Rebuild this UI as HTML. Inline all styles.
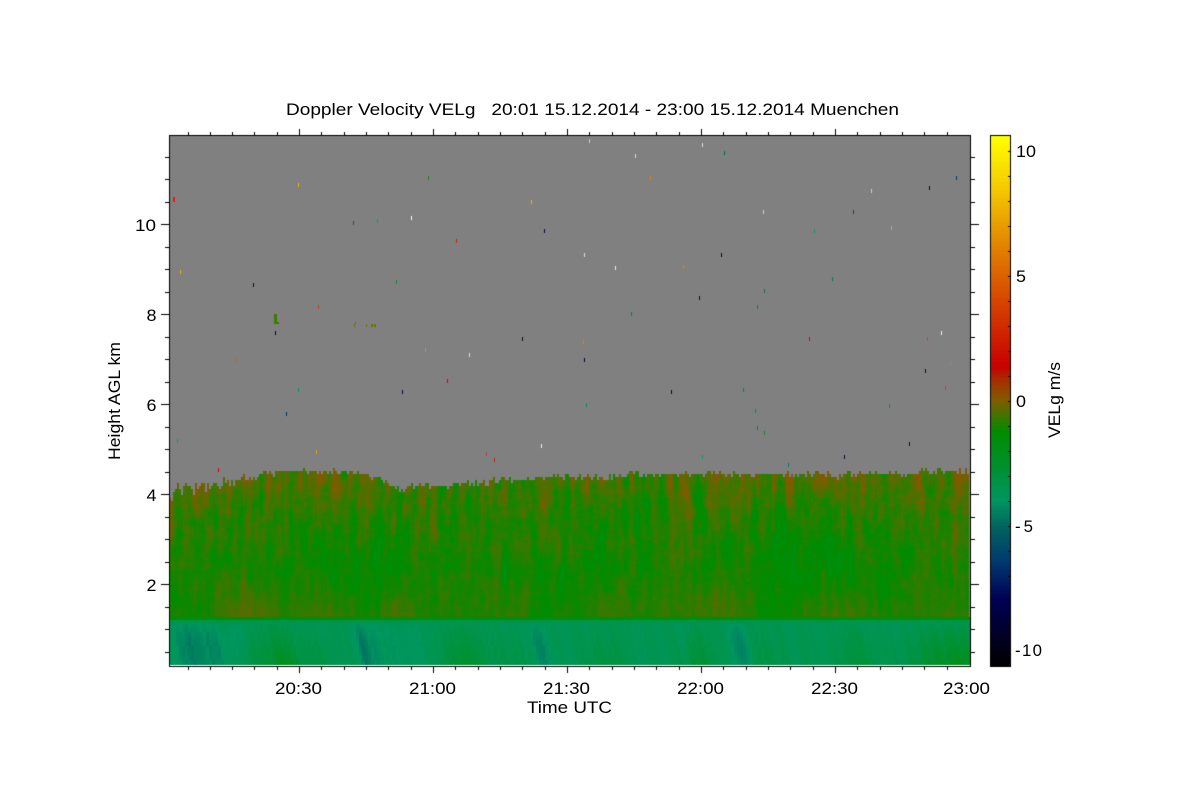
<!DOCTYPE html>
<html>
<head>
<meta charset="utf-8">
<title>Doppler Velocity VELg</title>
<style>
html,body{margin:0;padding:0;background:#fff;width:1200px;height:800px;overflow:hidden}
#wrap{position:relative;width:1200px;height:800px}
canvas,svg{position:absolute;left:0;top:0}
text{font-family:"Liberation Sans",sans-serif;fill:#000;font-size:16.8px}
</style>
</head>
<body>
<div id="wrap">
<canvas id="c" width="1200" height="800"></canvas>
<svg width="1200" height="800" viewBox="0 0 1200 800" xmlns="http://www.w3.org/2000/svg">
<text x="286" y="115" textLength="613" lengthAdjust="spacingAndGlyphs" xml:space="preserve">Doppler Velocity VELg   20:01 15.12.2014 - 23:00 15.12.2014 Muenchen</text>
<text x="275" y="694" textLength="47" lengthAdjust="spacingAndGlyphs">20:30</text>
<text x="409" y="694" textLength="47" lengthAdjust="spacingAndGlyphs">21:00</text>
<text x="543" y="694" textLength="47" lengthAdjust="spacingAndGlyphs">21:30</text>
<text x="677" y="694" textLength="47" lengthAdjust="spacingAndGlyphs">22:00</text>
<text x="811" y="694" textLength="47" lengthAdjust="spacingAndGlyphs">22:30</text>
<text x="943" y="694" textLength="47" lengthAdjust="spacingAndGlyphs">23:00</text>
<text x="527" y="713" textLength="85" lengthAdjust="spacingAndGlyphs">Time UTC</text>
<text x="135" y="231" textLength="21" lengthAdjust="spacingAndGlyphs">10</text>
<text x="146.500" y="321" textLength="10" lengthAdjust="spacingAndGlyphs">8</text>
<text x="146.500" y="411" textLength="10" lengthAdjust="spacingAndGlyphs">6</text>
<text x="146.500" y="501" textLength="10" lengthAdjust="spacingAndGlyphs">4</text>
<text x="146.500" y="591" textLength="10" lengthAdjust="spacingAndGlyphs">2</text>
<text transform="translate(120,460) rotate(-90)" textLength="118" lengthAdjust="spacingAndGlyphs">Height AGL km</text>
<text transform="translate(1060,438) rotate(-90)" textLength="76" lengthAdjust="spacingAndGlyphs">VELg m/s</text>
<text x="1016" y="157" textLength="20" lengthAdjust="spacingAndGlyphs">10</text>
<text x="1016" y="282" textLength="10" lengthAdjust="spacingAndGlyphs">5</text>
<text x="1016" y="407" textLength="10" lengthAdjust="spacingAndGlyphs">0</text>
<text x="1015" y="532" textLength="18" lengthAdjust="spacing">-5</text>
<text x="1015" y="656" textLength="27" lengthAdjust="spacing">-10</text>
</svg>
</div>
<script>
(function(){
var c=document.getElementById('c').getContext('2d');
var seed=12345;
function R(){seed=(seed+0x6D2B79F5)|0;var t=Math.imul(seed^(seed>>>15),1|seed);t=(t+Math.imul(t^(t>>>7),61|t))^t;return((t^(t>>>14))>>>0)/4294967296;}
var S=[[136,255,255,0],[190,245,200,0],[247,225,130,0],[300,215,70,0],[367,200,0,0],[378,170,40,0],[400,130,90,0],[415,70,115,0],[432,0,140,0],[470,0,145,50],[500,0,150,95],[530,0,95,95],[560,0,60,110],[600,0,0,85],[640,0,0,30],[667,0,0,0]];
function colY(y){
 if(y<=S[0][0])return [255,255,0];
 for(var i=1;i<S.length;i++){if(y<=S[i][0]){var a=S[i-1],b=S[i],t=(y-a[0])/(b[0]-a[0]);return [a[1]+(b[1]-a[1])*t,a[2]+(b[2]-a[2])*t,a[3]+(b[3]-a[3])*t];}}
 return [0,0,0];
}
function colV(v){var k=colY(401-25*v);return 'rgb('+Math.round(k[0])+','+Math.round(k[1])+','+Math.round(k[2])+')';}
function g(x,m,w){var d=(x-m)/w;return Math.exp(-d*d);}
// background
c.fillStyle='#fff';c.fillRect(0,0,1200,800);
c.fillStyle='#808080';c.fillRect(169,135,801,531);
// cloud top
var TP=[[169,488],[190,486],[230,480],[280,472],[350,472],[380,478],[395,488],[440,486],[470,483],[520,479],[600,476],[700,474],[800,474],[840,476],[870,473],[970,472]];
function top(x){for(var i=1;i<TP.length;i++){if(x<=TP[i][0]){var a=TP[i-1],b=TP[i];return a[1]+(b[1]-a[1])*(x-a[0])/(b[0]-a[0]);}}return 472;}
// noise: columns
var W=400,H=60,n=[],i,j;
for(i=0;i<W;i++){n[i]=[];var p=(R()-0.5)*2;for(j=0;j<H;j++){p=0.88*p+(R()-0.5)*0.7;n[i][j]=p;}}
var n2=[];
for(i=0;i<W;i++){n2[i]=[];for(j=0;j<H;j++){var a=n[Math.max(0,i-1)][j],b=n[Math.min(W-1,i+1)][j];n2[i][j]=0.4*n[i][j]+0.3*a+0.3*b;}}
// slow variations
var lf=[],pp=0;
for(i=0;i<W;i++){pp=0.96*pp+(R()-0.5)*0.25;lf[i]=pp;}
for(i=0;i<W;i++){
 var x=169+i*2,t0=top(x),jit=R();
 var tt=Math.round((t0+(jit<0.2?-3:jit>0.8?3:0))/3)*3;
 if(x<240&&R()<0.35)tt+=3+Math.floor(R()*3)*3;
 for(j=0;j<H;j++){
  var y=465+j*3;
  if(y<tt)continue;
  if(y>=618)break;
  var f=Math.min(1,Math.max(0,(y-t0)/(618-t0)));
  var base;
  if(f<0.3)base=-0.55-0.4*(f/0.3);else if(f<0.6)base=-0.95-0.15*(f-0.3)/0.3;else base=-1.1;
  var amp=0.45+0.65*(1-f);
  var v=base+n2[i][j]*amp+lf[i]*0.18*(1-f*0.4);
  v+=0.1*Math.sin(x/37+y/41)+0.08*Math.sin(x/83-y/29+1.3);
  if(x<300)v+=0.3*(1-f)*(300-x)/130;
  if(f>0.62){
   var w=(f-0.62)/0.38;
   var pat=0.9*g(x,245,30)+0.85*g(x,320,28)+0.7*g(x,400,25)+0.85*g(x,515,22)+0.7*g(x,600,30)+0.7*g(x,720,25)+0.85*g(x,830,25)+0.8*g(x,955,25)+0.45*g(x,465,25);
   v+=pat*w*0.65;
   if(x<215)v-=0.15;
  }
  if(v>-0.05)v=-0.05+(v+0.05)*0.4;
  c.fillStyle=colV(v);c.fillRect(x,y,2,3);
 }
}
// band
c.fillStyle=colV(-1.45);c.fillRect(170,617,800,3);
c.fillStyle=colV(-3.5);c.fillRect(170,620,800,4);
// boundary layer
var DK=[[188,14,1.0],[212,9,.75],[228,7,.4],[242,9,.35],[362,6,1.3],[373,5,.7],[392,8,.45],[408,7,.4],[417,4,.35],[536,6,.9],[544,4,.6],[685,8,.35],[738,7,1.0],[746,5,.5],[825,8,.15],[905,10,.1]];
var GR=[[278,14,1.1],[250,15,.5],[310,18,.4],[462,25,.7],[515,15,.3],[600,20,.4],[692,14,.8],[760,20,.3],[855,30,.4],[930,25,.9],[960,15,1.0]];
var nb=[];for(i=0;i<270;i++){nb[i]=(R()-0.5);}
for(var yy=624;yy<665;yy+=2){
 for(var xx=170;xx<970;xx+=3){
  var sx=xx-(yy-645)*0.22,d=0,gr=0,q;
  for(q=0;q<DK.length;q++)d+=DK[q][2]*g(sx,DK[q][0],DK[q][1]);
  for(q=0;q<GR.length;q++)gr+=GR[q][2]*g(sx,GR[q][0],GR[q][1]);
  var ny=(yy-624)/41;
  var streak=nb[Math.max(0,Math.min(269,Math.floor((sx-170)/3)))]||0;
  var vv=-3.65-d*ny*0.25-d*0.7*(0.4+0.6*Math.sin(Math.min(1,ny+0.1)*2.6))+gr*(0.2+1.1*ny)+streak*0.4;
  c.fillStyle=colV(vv);c.fillRect(xx,yy,3,2);
 }
}
// white row above axis
c.fillStyle='#fff';c.fillRect(170,665,800,1);
// speckles
var D=[[173,199,'#ff1010'],[180,272,'#e0b000'],[298,185,'#e8b000'],[353,223,'#086850'],[377,221,'#00a060'],[411,218,'#ffffff'],[428,178,'#009020'],[456,241,'#d22000'],[531,202,'#f0b000'],[544,231,'#001030'],[589,141,'#cccccc'],[635,156,'#dddddd'],[650,178,'#e08000'],[702,145,'#dddddd'],[724,153,'#006860'],[763,212,'#ccccdd'],[853,212,'#303860'],[871,191,'#cccccc'],[929,188,'#000830'],[956,178,'#004060'],[891,228,'#aaaaaa'],[814,231,'#00a060'],[832,279,'#008050'],[721,255,'#000830'],[683,267,'#e08000'],[615,268,'#eeeeee'],[584,255,'#dddddd'],[396,282,'#009030'],[253,285,'#001020'],[318,307,'#d04000'],[764,291,'#008050'],[757,307,'#009020'],[699,298,'#001030'],[631,314,'#008050'],[275,333,'#000830'],[235,360,'#d06000'],[583,342,'#e08000'],[584,360,'#000830'],[522,339,'#001020'],[469,355,'#dddddd'],[425,350,'#999999'],[809,339,'#e00000'],[941,333,'#eeeeee'],[927,339,'#d04040'],[950,363,'#888888'],[925,371,'#001020'],[945,388,'#c04040'],[447,381,'#d00000'],[298,390,'#009070'],[402,392,'#000830'],[671,392,'#001020'],[743,390,'#008060'],[889,406,'#208050'],[586,405,'#009060'],[286,414,'#003060'],[755,411,'#009050'],[757,428,'#008060'],[764,433,'#009040'],[177,441,'#00a070'],[316,452,'#e8a000'],[541,446,'#eeeeee'],[486,454,'#b04040'],[494,460,'#c02000'],[702,457,'#00a060'],[788,465,'#008060'],[844,457,'#001030'],[909,444,'#001020'],[218,470,'#d00000']];
D.forEach(function(d){c.fillStyle=d[2];c.fillRect(d[0],d[1]-2,1,4);});
c.fillStyle='#ff1010';c.fillRect(173,197,2,5);
c.fillStyle='#3f7a00';c.fillRect(274,314,3,10);c.fillRect(274,322,5,2);
c.fillStyle='#707000';c.fillRect(354,324,1,3);c.fillRect(355,322,1,2);c.fillRect(366,324,1,3);c.fillRect(371,324,2,3);c.fillRect(374,324,2,3);
// colorbar
for(var yb=135;yb<667;yb++){var k=colY(Math.round(yb/4)*4);c.fillStyle='rgb('+Math.round(k[0])+','+Math.round(k[1])+','+Math.round(k[2])+')';c.fillRect(990,yb,20,1);}
c.fillStyle='#000';
c.fillRect(990,135,21,1);c.fillRect(990,135,1,532);c.fillRect(1010,135,1,532);c.fillRect(990,666,21,1);
for(var q2=0;q2<=20;q2++){c.fillRect(1008,151+25*q2,2,1);}
// frame
c.fillRect(169,135,802,1);c.fillRect(169,666,802,1);c.fillRect(169,135,1,532);c.fillRect(970,135,1,532);
// x ticks
for(var m=0;m<36;m++){
 var tx=Math.round(187.5+m*22.33);
 if(tx>968)break;
 var mj=(Math.abs((tx-298)/134-Math.round((tx-298)/134))<0.02);
 var len=mj?6:3;
 c.fillRect(tx,135-len,1,len);
 c.fillRect(tx,667,1,mj?6:3);
}
// y ticks
for(var h=0;h<24;h++){
 var ty=Math.round(156.5+h*22.5);
 if(ty>660)break;
 var mj2=(h%4===3);
 var tl=mj2?8:4,tr=mj2?9:5;
 c.fillRect(169-tl,ty,tl,1);
 c.fillRect(971,ty,tr-1,1);
}
})();
</script>
</body>
</html>
